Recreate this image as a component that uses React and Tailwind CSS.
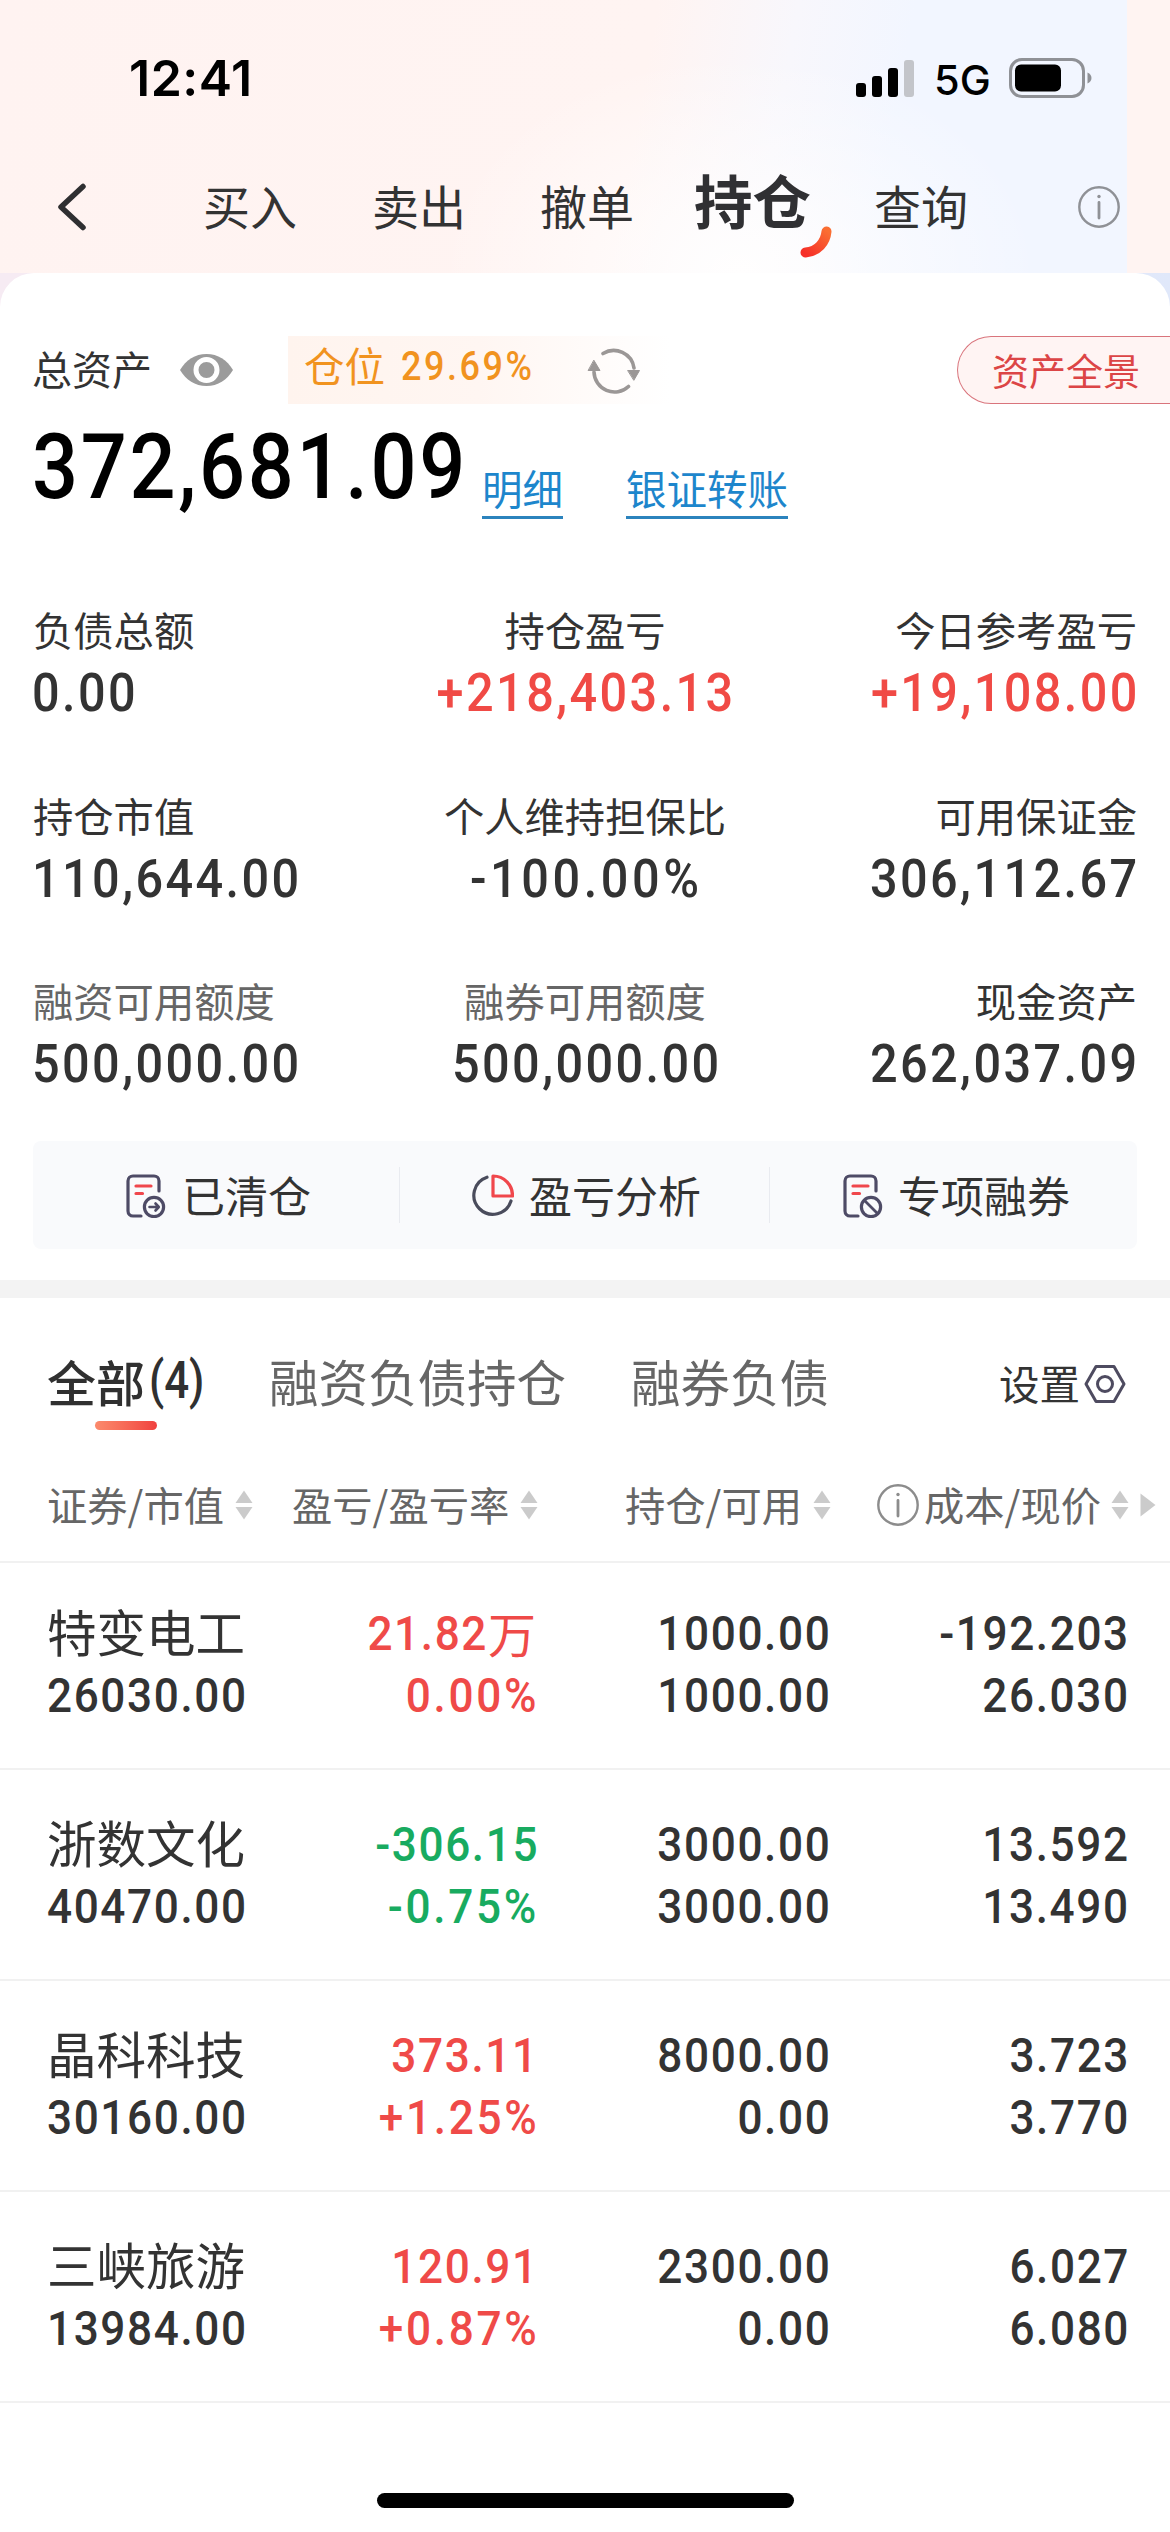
const CN = "font-['Noto_Sans_CJK_SC',sans-serif]";

const stats = [
  [
    { label: "负债总额", value: "0.00" },
    { label: "持仓盈亏", value: "+218,403.13", red: true },
    { label: "今日参考盈亏", value: "+19,108.00", red: true },
  ],
  [
    { label: "持仓市值", value: "110,644.00" },
    { label: "个人维持担保比", value: "-100.00%", wide: true },
    { label: "可用保证金", value: "306,112.67" },
  ],
  [
    { label: "融资可用额度", value: "500,000.00", dim: true },
    { label: "融券可用额度", value: "500,000.00", dim: true },
    { label: "现金资产", value: "262,037.09" },
  ],
];

const holdings = [
  { name: "特变电工", cap: "26030.00", pl: "21.82", unit: "万", rate: "0.00%", color: "text-[#ef4a48]", pos: "1000.00", avail: "1000.00", cost: "-192.203", price: "26.030" },
  { name: "浙数文化", cap: "40470.00", pl: "-306.15", rate: "-0.75%", color: "text-[#18ab60]", pos: "3000.00", avail: "3000.00", cost: "13.592", price: "13.490" },
  { name: "晶科科技", cap: "30160.00", pl: "373.11", rate: "+1.25%", color: "text-[#ef4a48]", pos: "8000.00", avail: "0.00", cost: "3.723", price: "3.770" },
  { name: "三峡旅游", cap: "13984.00", pl: "120.91", rate: "+0.87%", color: "text-[#ef4a48]", pos: "2300.00", avail: "0.00", cost: "6.027", price: "6.080" },
];

// Narrowed figures: glyphs are condensed horizontally and re-spaced.
function Num({ children, className = "origin-left", scale = "scale-x-[0.9]" }) {
  return <span className={"inline-block align-top font-[Roboto] font-medium " + scale + " " + className}>{children}</span>;
}

function InfoIcon({ className, stroke = "#8f9196" }) {
  return (
    <svg className={className} viewBox="0 0 42 42" fill="none" stroke={stroke}>
      <circle cx="21" cy="21" r="19.700" strokeWidth="2.400" />
      <path d="M21 16.500V32" strokeWidth="2.800" strokeLinecap="round" />
      <circle cx="21" cy="10.500" r="1.700" fill={stroke} stroke="none" />
    </svg>
  );
}

function StatusBar() {
  return (
    <div className="flex h-[156px] items-center pl-[129px] font-[Inter,sans-serif] text-black">
      <span className="w-[726px] text-[50px] leading-[60px] font-semibold tracking-[0.500px]">12:41</span>
      <svg className="h-[38px] w-[60px]" viewBox="0 0 60 38">
        <rect x="1" y="24" width="10" height="14" rx="3" />
        <rect x="17" y="17" width="10" height="21" rx="3" />
        <rect x="33" y="9" width="10" height="29" rx="3" />
        <rect x="49" y="1" width="10" height="37" rx="3" fill="#c3c5ca" />
      </svg>
      <span className="mt-[3px] ml-[19px] w-[75px] text-[41.500px] leading-[60px] font-medium">5G</span>
      <svg className="h-[40px] w-[84px]" viewBox="0 0 84 40">
        <rect x="1.500" y="1.500" width="73" height="37" rx="11.500" fill="none" stroke="#8f9196" strokeWidth="3" />
        <rect x="6" y="6.500" width="46" height="27" rx="6" />
        <path d="M78.500 14.500c2.500 1 4 3.200 4 5.500s-1.500 4.500-4 5.500z" fill="#8f9196" />
      </svg>
    </div>
  );
}

function Nav() {
  return (
    <nav className="flex h-[117px] items-start text-[47px] leading-[98px] text-[#333]">
      <svg className="mt-[27px] ml-[56px] h-[48px] w-[32px]" viewBox="0 0 32 48" fill="none" stroke="#2f2f31" strokeWidth="5.500" strokeLinecap="round" strokeLinejoin="round">
        <path d="M27 3.500L5 24l22 20.500" />
      </svg>
      <span className="ml-[115px]">买入</span>
      <span className="ml-[75px]">卖出</span>
      <span className="ml-[74px]">撤单</span>
      <span className="relative ml-[60px] text-[58.500px] leading-[85px] font-bold text-[#303033]">
        持仓
        <svg className="absolute top-[70px] left-[106px] h-[32px] w-[32px]" viewBox="0 0 32 32" fill="none">
          <defs>
            <linearGradient id="swoosh" x1="26" y1="4" x2="6" y2="28" gradientUnits="userSpaceOnUse">
              <stop offset="0" stopColor="#fa6e32" />
              <stop offset="1" stopColor="#f62f28" />
            </linearGradient>
          </defs>
          <path d="M26.500 5.500C25.500 16 18 25.500 5.500 26.500" stroke="url(#swoosh)" strokeWidth="10" strokeLinecap="round" />
        </svg>
      </span>
      <span className="ml-[63px]">查询</span>
      <InfoIcon className="mt-[30px] ml-[110px] size-[42px] shrink-0" />
    </nav>
  );
}

function Summary() {
  return (
    <section className="h-[300px] pl-[32px]">
      <div className="flex h-[68px] items-center">
        <span className="mt-[-4px] text-[40px] leading-[60px] text-[#333]">总资产</span>
        <svg className="ml-[28px] h-[32px] w-[53px]" viewBox="0 0 53 32">
          <path d="M0 16C6 6 15 0 26.500 0S47 6 53 16C47 26 38 32 26.500 32S6 26 0 16z" fill="#9b9b9b" />
          <circle cx="26.500" cy="16" r="10.500" fill="none" stroke="#fff" strokeWidth="5" />
        </svg>
        <div className="ml-[55px] flex h-[68px] w-[382px] items-center bg-linear-to-r from-[#fff4ee] via-[#fff6f2] to-white pl-[16px] text-[#f1931f]">
          <span className="mt-[-10px] text-[40.500px] leading-[60px]">仓位</span>
          <Num className="mt-[-7px] ml-[16px] w-[150px] origin-left text-[40px] leading-[60px] tracking-[2.800px]">29.69%</Num>
          <svg className="mt-[1px] ml-[36px] h-[46px] w-[54px]" viewBox="0 0 54 46" fill="none" stroke="#9b9796" strokeWidth="3.600" strokeLinecap="round">
            <path d="M16 5.500A20.500 20.500 0 0 1 47 20" />
            <path d="M41.500 38.500A20.500 20.500 0 0 1 7 24" />
            <path d="M41 22.500h11.500L47 32z" fill="#9b9796" strokeWidth="1" />
            <path d="M1.500 22.500H13L7 12.500z" fill="#9b9796" strokeWidth="1" />
          </svg>
        </div>
        <span className="ml-auto h-[68px] w-[213px] rounded-l-full border-[1.500px] border-r-0 border-[#d9747c] bg-[#fff4f3] pl-[34px] text-[37px] leading-[66px] text-[#dc4546]">资产全景</span>
      </div>
      <div className="flex items-start">
        <div className="w-[450px]">
          <Num className="mt-[9px] origin-left text-[90px] leading-[110px] tracking-[3px] text-black">372,681.09</Num>
        </div>
        <span className="mt-[57px] h-[58px] border-b-[3px] border-[#2b83bd] text-[40.500px] leading-[53px] text-[#1d86cc]">明细</span>
        <span className="mt-[57px] ml-[63px] h-[58px] border-b-[3px] border-[#2b83bd] text-[40.500px] leading-[53px] text-[#1d86cc]">银证转账</span>
      </div>
    </section>
  );
}

const aligns = ["text-left", "text-center", "text-right"];
const origins = ["origin-left -ml-px", "origin-center -mr-[3px]", "origin-right -mr-[3px]"];

function Stats() {
  return (
    <section className="mx-[33px] flex h-[506px] flex-col">
      {stats.map((row, i) => (
        <div key={i} className="grid h-[185.500px] shrink-0 grid-cols-3">
          {row.map((s, j) => (
            <div key={s.label} className={aligns[j]}>
              <div className={"-mt-[2px] text-[40.300px] leading-[60px] whitespace-nowrap " + (s.dim ? "text-[#666]" : "text-[#333]")}>{s.label}</div>
              <div className={"mt-[3px] h-[62px] text-[54px] leading-[62px] whitespace-nowrap " + (s.red ? "text-[#f04a45]" : "text-[#333]")}>
                <Num className={(s.wide ? "tracking-[4px] " : "tracking-[2.700px] ") + origins[j]}>{s.value}</Num>
              </div>
            </div>
          ))}
        </div>
      ))}
    </section>
  );
}

function DocIcon({ children, className }) {
  return (
    <svg className={className} viewBox="0 0 40 44" fill="none" stroke="#4e4b66" strokeWidth="3.200" strokeLinecap="round" strokeLinejoin="round">
      <path d="M33 17V7a5 5 0 0 0-5-5H7a5 5 0 0 0-5 5v30a5 5 0 0 0 5 5h8" />
      <path d="M10 12h15M10 19.500h6.500" stroke="#f0474c" />
      <circle cx="28" cy="33" r="9.600" />
      {children}
    </svg>
  );
}

function Actions() {
  return (
    <section className="mx-[33px] grid h-[108px] grid-cols-[366px_371px_1fr] items-center rounded-lg bg-[#f9fafc] text-[43px] leading-[60px] text-[#333]">
      <div className="flex items-center pl-[93px]">
        <DocIcon className="mt-[2px] h-[44px] w-[40px]">
          <path d="M23.500 33h9M29.500 29.500l3.300 3.500-3.300 3.500" strokeWidth="2.600" />
        </DocIcon>
        <span className="-mt-[2px] ml-[16px]">已清仓</span>
      </div>
      <div className="flex h-[56px] items-center border-x border-[#e9ebf0] pl-[71px]">
        <svg className="h-[43px] w-[43px]" viewBox="0 0 43 43" fill="none" strokeWidth="3.200" strokeLinecap="round" strokeLinejoin="round">
          <path d="M16 3.200A19 19 0 1 0 40 27" stroke="#4a4c5c" />
          <path d="M22 2v20h19.500A19.500 19.500 0 0 0 22 2z" stroke="#f0474c" />
        </svg>
        <span className="-mt-[2px] ml-[15px]">盈亏分析</span>
      </div>
      <div className="flex items-center pl-[73px]">
        <DocIcon className="mt-[2px] h-[44px] w-[40px]">
          <path d="M21.500 26.500l13 13" strokeWidth="2.800" />
        </DocIcon>
        <span className="-mt-[2px] ml-[15px]">专项融券</span>
      </div>
    </section>
  );
}

function Tabs() {
  return (
    <div className="flex h-[148px] items-start pt-[46px] pl-[47px] text-[49.500px] leading-[73px] text-[#666]">
      <div className="relative w-[222px] font-medium whitespace-nowrap text-[#303030]">
        <span className="text-[49px]">全部</span>
        <Num scale="scale-x-[0.86]" className="ml-[4px] origin-left text-[51px]">(4)</Num>
        <span className="absolute top-[77px] left-[48px] h-[9px] w-[62px] rounded-full bg-linear-to-r from-[#fb8a6c] to-[#f0403f]" />
      </div>
      <span className="w-[362px]">融资负债持仓</span>
      <span>融券负债</span>
      <span className="ml-[170px] text-[40.500px] leading-[77px] text-[#333]">设置</span>
      <svg className="mt-[20px] ml-[4px] h-[40px] w-[42px]" viewBox="0 0 42 40" fill="none" stroke="#4e4b60" strokeWidth="3" strokeLinejoin="round">
        <path d="M12 2.500h18L40 20 30 37.500H12L2 20z" />
        <circle cx="21" cy="20" r="7.500" />
      </svg>
    </div>
  );
}

function Sort({ className }) {
  return (
    <svg className={"mt-[2px] h-[30px] w-[18px] " + className} viewBox="0 0 18 30" fill="#cbcbcb">
      <path d="M9 0.500L17.500 13H0.500z" />
      <path d="M0.500 17h17L9 29.500z" />
    </svg>
  );
}

function TableHead() {
  return (
    <div className="flex h-[117px] items-center border-b-2 border-[#f1f1f1] pl-[47px] text-[40.300px] leading-[60px] whitespace-nowrap text-[#666]">
      <div className="flex w-[245px] items-center">证券/市值<Sort className="ml-[11px]" /></div>
      <div className="flex w-[333px] items-center">盈亏/盈亏率<Sort className="ml-[11px]" /></div>
      <div className="flex w-[252px] items-center">持仓/可用<Sort className="ml-[11px]" /></div>
      <InfoIcon className="mt-[2px] size-[42px]" stroke="#8c8c8c" />
      <div className="ml-[5px] flex items-center">成本/现价<Sort className="ml-[10px]" /></div>
      <svg className="mt-[2px] ml-[11px] h-[24px] w-[16px]" viewBox="0 0 16 24" fill="#cbcbcb"><path d="M0.500 0.500L15.500 12 0.500 23.500z" /></svg>
    </div>
  );
}

const right = "origin-right -mr-[3px]";

function Holding({ h, first }) {
  return (
    <div className={"grid grid-cols-[230px_306px_292px_299px] content-start border-b-2 border-[#f1f1f1] text-[49px] leading-[62px] tracking-[1.800px] whitespace-nowrap text-[#333]" + (first ? " h-[207px] pt-[40px]" : " h-[211px] pt-[44px]")}>
      <div className="pl-[47px]">
        <div className="h-[62px] text-[49.500px] leading-[56px] tracking-normal">{h.name}</div>
        <div className="h-[62px]"><Num className="origin-left">{h.cap}</Num></div>
      </div>
      <div className={"text-right " + h.color}>
        <div className="flex h-[62px] justify-end">
          <Num className={h.unit ? "origin-right" : right}>{h.pl}</Num>
          {h.unit && <span className="text-[48px] leading-[58px] tracking-normal">{h.unit}</span>}
        </div>
        <div className="h-[62px]"><Num className={"tracking-[3px] " + right}>{h.rate}</Num></div>
      </div>
      <div className="text-right">
        <div className="h-[62px]"><Num className={right}>{h.pos}</Num></div>
        <div className="h-[62px]"><Num className={right}>{h.avail}</Num></div>
      </div>
      <div className="text-right">
        <div className="h-[62px]"><Num className={right}>{h.cost}</Num></div>
        <div className="h-[62px]"><Num className={right}>{h.price}</Num></div>
      </div>
    </div>
  );
}

export default function App() {
  return (
    <div className={"flex h-[2532px] w-[1170px] flex-col overflow-hidden bg-[linear-gradient(90deg,#f6ebf3_0%,#f6ebf3_50%,#e0e8fa_100%)] " + CN}>
      <header className="flex h-[273px] shrink-0">
        <div className="w-[1127px] shrink-0 bg-[radial-gradient(ellipse_300px_220px_at_740px_273px,#fffefe_0%,#fffefe00_100%),linear-gradient(100deg,#fff3f1_0%,#fff4f2_56%,#f8f7fc_68%,#f2f6ff_78%,#f2f6ff_100%)]">
          <div className="w-[1170px]">
            <StatusBar />
            <Nav />
          </div>
        </div>
        <div className="grow bg-[#fff4f2]" />
      </header>
      <main className="flex grow flex-col rounded-t-[34px] bg-white pt-[63px]">
        <Summary />
        <div className="-mt-[35px]">
          <Stats />
        </div>
        <div className="mt-[34px]">
          <Actions />
        </div>
        <div className="mt-[31px] h-[18px] bg-[#f3f3f3]" />
        <Tabs />
        <TableHead />
        {holdings.map((h, i) => (
          <Holding key={h.name} h={h} first={i === 0} />
        ))}
        <div className="mx-auto mt-auto mb-[24px] h-[15px] w-[417px] rounded-full bg-black" />
      </main>
    </div>
  );
}
